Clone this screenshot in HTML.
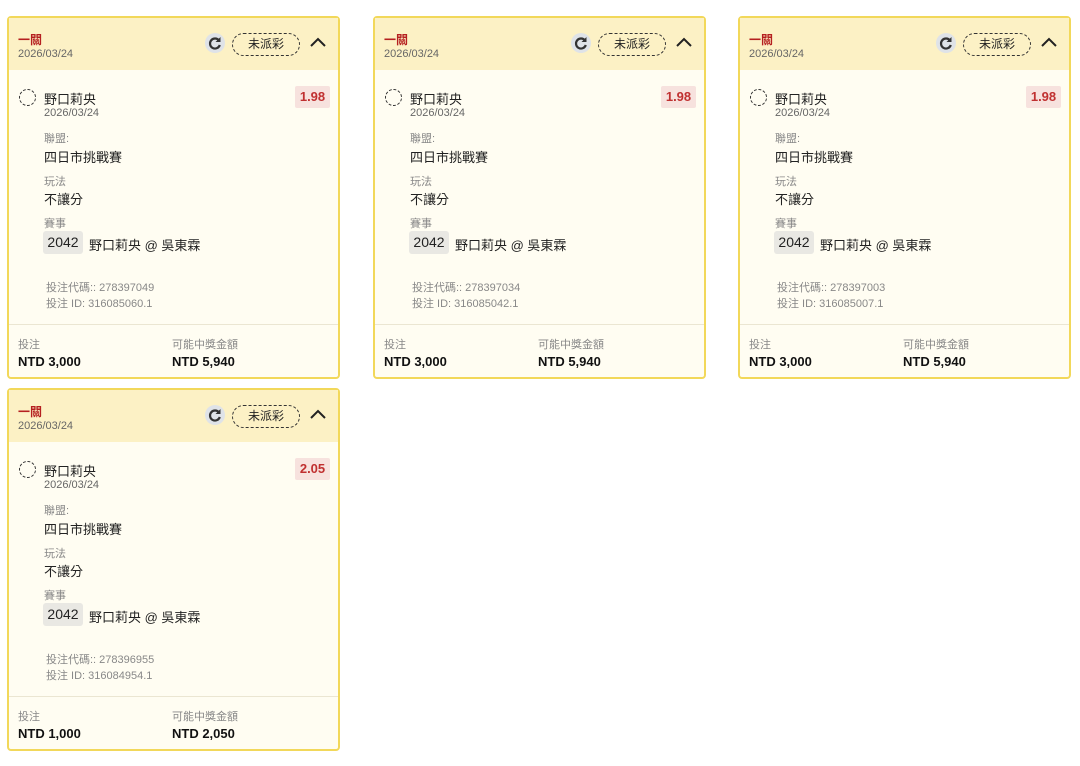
<!DOCTYPE html>
<html><head><meta charset="utf-8"><style>
body{margin:0;width:1080px;height:766px;background:#fff;font-family:"Liberation Sans","Noto Sans CJK TC",sans-serif;position:relative;overflow:hidden}
.c{position:absolute;width:333px;height:363px;border:2px solid #f2d85a;border-radius:4px;background:#fffdf2;box-sizing:border-box}
.h{position:absolute;left:0;top:0;right:0;height:52px;background:#fcf1c5}
.a{position:absolute;white-space:nowrap}
.t1{left:9px;top:13px;font-size:12px;color:#b52020;font-weight:bold}
.d{font-size:11px;color:#666}
.ref{left:196px;top:15px;width:20px;height:20px;border-radius:50%;background:#dfe3e8}
.b{left:223px;top:15px;width:68px;height:23px;border:1px dashed #333;border-radius:12px;box-sizing:border-box;font-size:12px;text-align:center;line-height:21px;color:#222}
.circ{left:10px;top:71px;width:17px;height:17px;border:1px dashed #333;border-radius:50%;box-sizing:border-box}
.n{font-size:13px;color:#222}
.l{font-size:11px;color:#888}
.o{left:286px;top:68px;width:35px;height:22px;background:#f7e2de;color:#c03030;font-weight:bold;font-size:13px;text-align:center;line-height:22px;border-radius:2px}
.box{left:34px;top:213px;width:40px;height:23px;background:#e9e8e3;border-radius:3px;font-size:14px;text-align:center;line-height:23px;color:#222}
.hr{left:0;right:0;top:306px;height:1px;background:#ebe6d2}
.f{font-size:13px;font-weight:bold;color:#111}
</style></head><body>
<div id="w"></div>
<script>
const data=[[7,16,"1.98","278397049","316085060.1","3,000","5,940"],[373,16,"1.98","278397034","316085042.1","3,000","5,940"],[738,16,"1.98","278397003","316085007.1","3,000","5,940"],[7,388,"2.05","278396955","316084954.1","1,000","2,050"]];
let h="";
for(const d of data){h+=`<div class="c" style="left:${d[0]}px;top:${d[1]}px">
<div class="h"></div>
<div class="a t1">一關</div>
<div class="a d" style="left:9px;top:30px">2026/03/24</div>
<div class="a ref"><svg width="20" height="20" viewBox="0 0 20 20"><path d="M14 7.5A5 5 0 1 0 14.8 12" fill="none" stroke="#333" stroke-width="2.2"/><path d="M15.5 4v5h-5z" fill="#333"/></svg></div>
<div class="a b">未派彩</div>
<div class="a" style="left:300px;top:17px"><svg width="18" height="14" viewBox="0 0 18 14"><path d="M2 11l7-7 7 7" fill="none" stroke="#222" stroke-width="2"/></svg></div>
<div class="a circ"></div>
<div class="a n" style="left:35px;top:71px">野口莉央</div>
<div class="a d" style="left:35px;top:89px">2026/03/24</div>
<div class="a o">${d[2]}</div>
<div class="a l" style="left:35px;top:112px">聯盟:</div>
<div class="a n" style="left:35px;top:129px">四日市挑戰賽</div>
<div class="a l" style="left:35px;top:155px">玩法</div>
<div class="a n" style="left:35px;top:171px">不讓分</div>
<div class="a l" style="left:35px;top:197px">賽事</div>
<div class="a box">2042</div>
<div class="a n" style="left:80px;top:217px">野口莉央 @ 吳東霖</div>
<div class="a l" style="left:37px;top:261px">投注代碼:: ${d[3]}</div>
<div class="a l" style="left:37px;top:277px">投注 ID: ${d[4]}</div>
<div class="a hr"></div>
<div class="a l" style="left:9px;top:318px">投注</div>
<div class="a f" style="left:9px;top:336px">NTD ${d[5]}</div>
<div class="a l" style="left:163px;top:318px">可能中獎金額</div>
<div class="a f" style="left:163px;top:336px">NTD ${d[6]}</div>
</div>`;}
document.getElementById("w").innerHTML=h;
</script>
</body></html>
